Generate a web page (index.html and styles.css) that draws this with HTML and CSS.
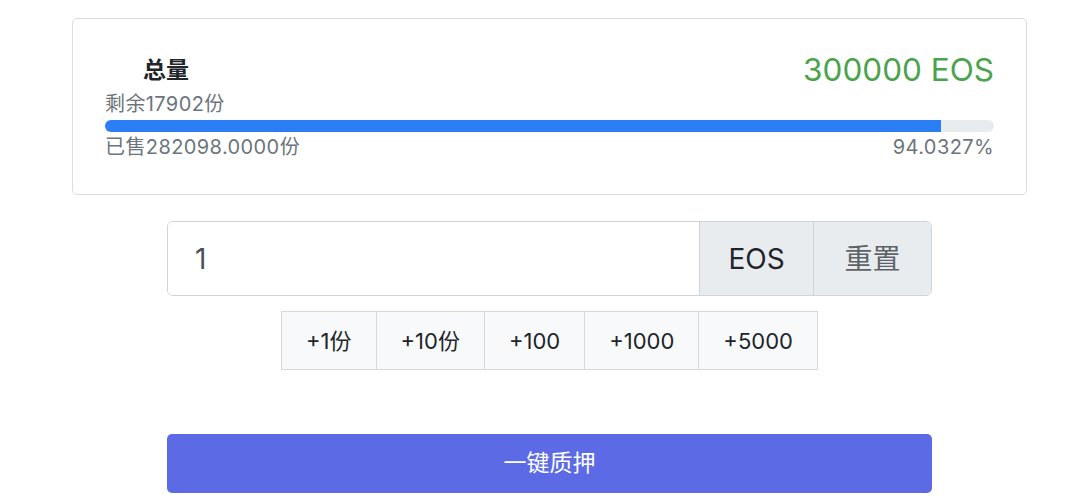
FILE: index.html
```html
<!DOCTYPE html>
<html lang="zh">
<head>
<meta charset="utf-8">
<link rel="stylesheet" href="styles.css">
</head>
<body>
<div class="page">
  <section class="card">
    <div class="head">
      <span class="title">总量</span>
      <span class="total">300000 EOS</span>
    </div>
    <div class="muted">剩余17902份</div>
    <div class="progress"><div class="bar" style="width: 94.0327%"></div></div>
    <div class="foot">
      <span class="muted">已售282098.0000份</span>
      <span class="muted">94.0327%</span>
    </div>
  </section>

  <div class="input-group">
    <input class="amount" type="text" value="1">
    <span class="addon unit">EOS</span>
    <button class="addon reset">重置</button>
  </div>

  <div class="quick">
    <button class="qbtn">+1份</button>
    <button class="qbtn">+10份</button>
    <button class="qbtn">+100</button>
    <button class="qbtn">+1000</button>
    <button class="qbtn">+5000</button>
  </div>

  <button class="submit">一键质押</button>
</div>
</body>
</html>
```

FILE: styles.css
```css
* { box-sizing: border-box; }
html, body { margin: 0; padding: 0; background: #fff; }
body {
  font-family: "Inter", "Noto Sans CJK SC", sans-serif;
  color: #212529;
}
.page {
  padding: 18px 0 0 19px;
  display: flex;
  flex-direction: column;
  align-items: center;
}
.card {
  width: 955px;
  border: 1px solid #dcdcdc;
  border-radius: 5px;
  padding: 32px 32px 36px 32px;
}
.head {
  display: flex;
  justify-content: space-between;
  align-items: center;
  height: 38px;
}
.title {
  font-size: 23px;
  font-weight: bold;
  padding-left: 38px;
  color: #212529;
  line-height: 38px;
}
.total {
  font-size: 31.5px;
  line-height: 38px;
  color: #4ca34e;
}
.muted {
  font-size: 20px;
  line-height: 22px;
  color: #6c757d;
  letter-spacing: 0.4px;
}
.card > .muted { margin-top: 4px; }
.progress {
  margin-top: 5px;
  height: 12px;
  border-radius: 6px;
  background: #e9ecef;
  overflow: hidden;
}
.bar {
  height: 100%;
  background: #2c7ef4;
}
.foot {
  display: flex;
  justify-content: space-between;
  margin-top: 4px;
}
.input-group {
  margin-top: 26px;
  width: 765px;
  height: 75px;
  display: flex;
  border: 1px solid #ced4da;
  border-radius: 6px;
  overflow: hidden;
}
.amount {
  flex: 1;
  border: none;
  outline: none;
  font: inherit;
  font-size: 28px;
  color: #495057;
  padding: 0 27px;
  background: #fff;
  min-width: 0;
}
.addon {
  display: flex;
  align-items: center;
  justify-content: center;
  background: #e9ecef;
  border: none;
  border-left: 1px solid #ced4da;
  font: inherit;
  font-size: 28px;
  line-height: 1;
}
.unit { width: 114px; color: #212529; }
.reset { width: 118px; color: #5f6368; }
.quick {
  margin-top: 15px;
  display: flex;
  border: 1px solid #d6d8db;
}
.qbtn {
  height: 57px;
  padding: 0 24px;
  background: #f8f9fa;
  border: none;
  border-left: 1px solid #d6d8db;
  font: inherit;
  font-size: 22px;
  line-height: 1;
  color: #212529;
}
.qbtn:first-child { border-left: none; }
.submit {
  margin-top: 64px;
  width: 765px;
  height: 59px;
  border: none;
  border-radius: 5px;
  background: #5c6be5;
  color: #fff;
  font: inherit;
  font-size: 23px;
  line-height: 1;
}
```
